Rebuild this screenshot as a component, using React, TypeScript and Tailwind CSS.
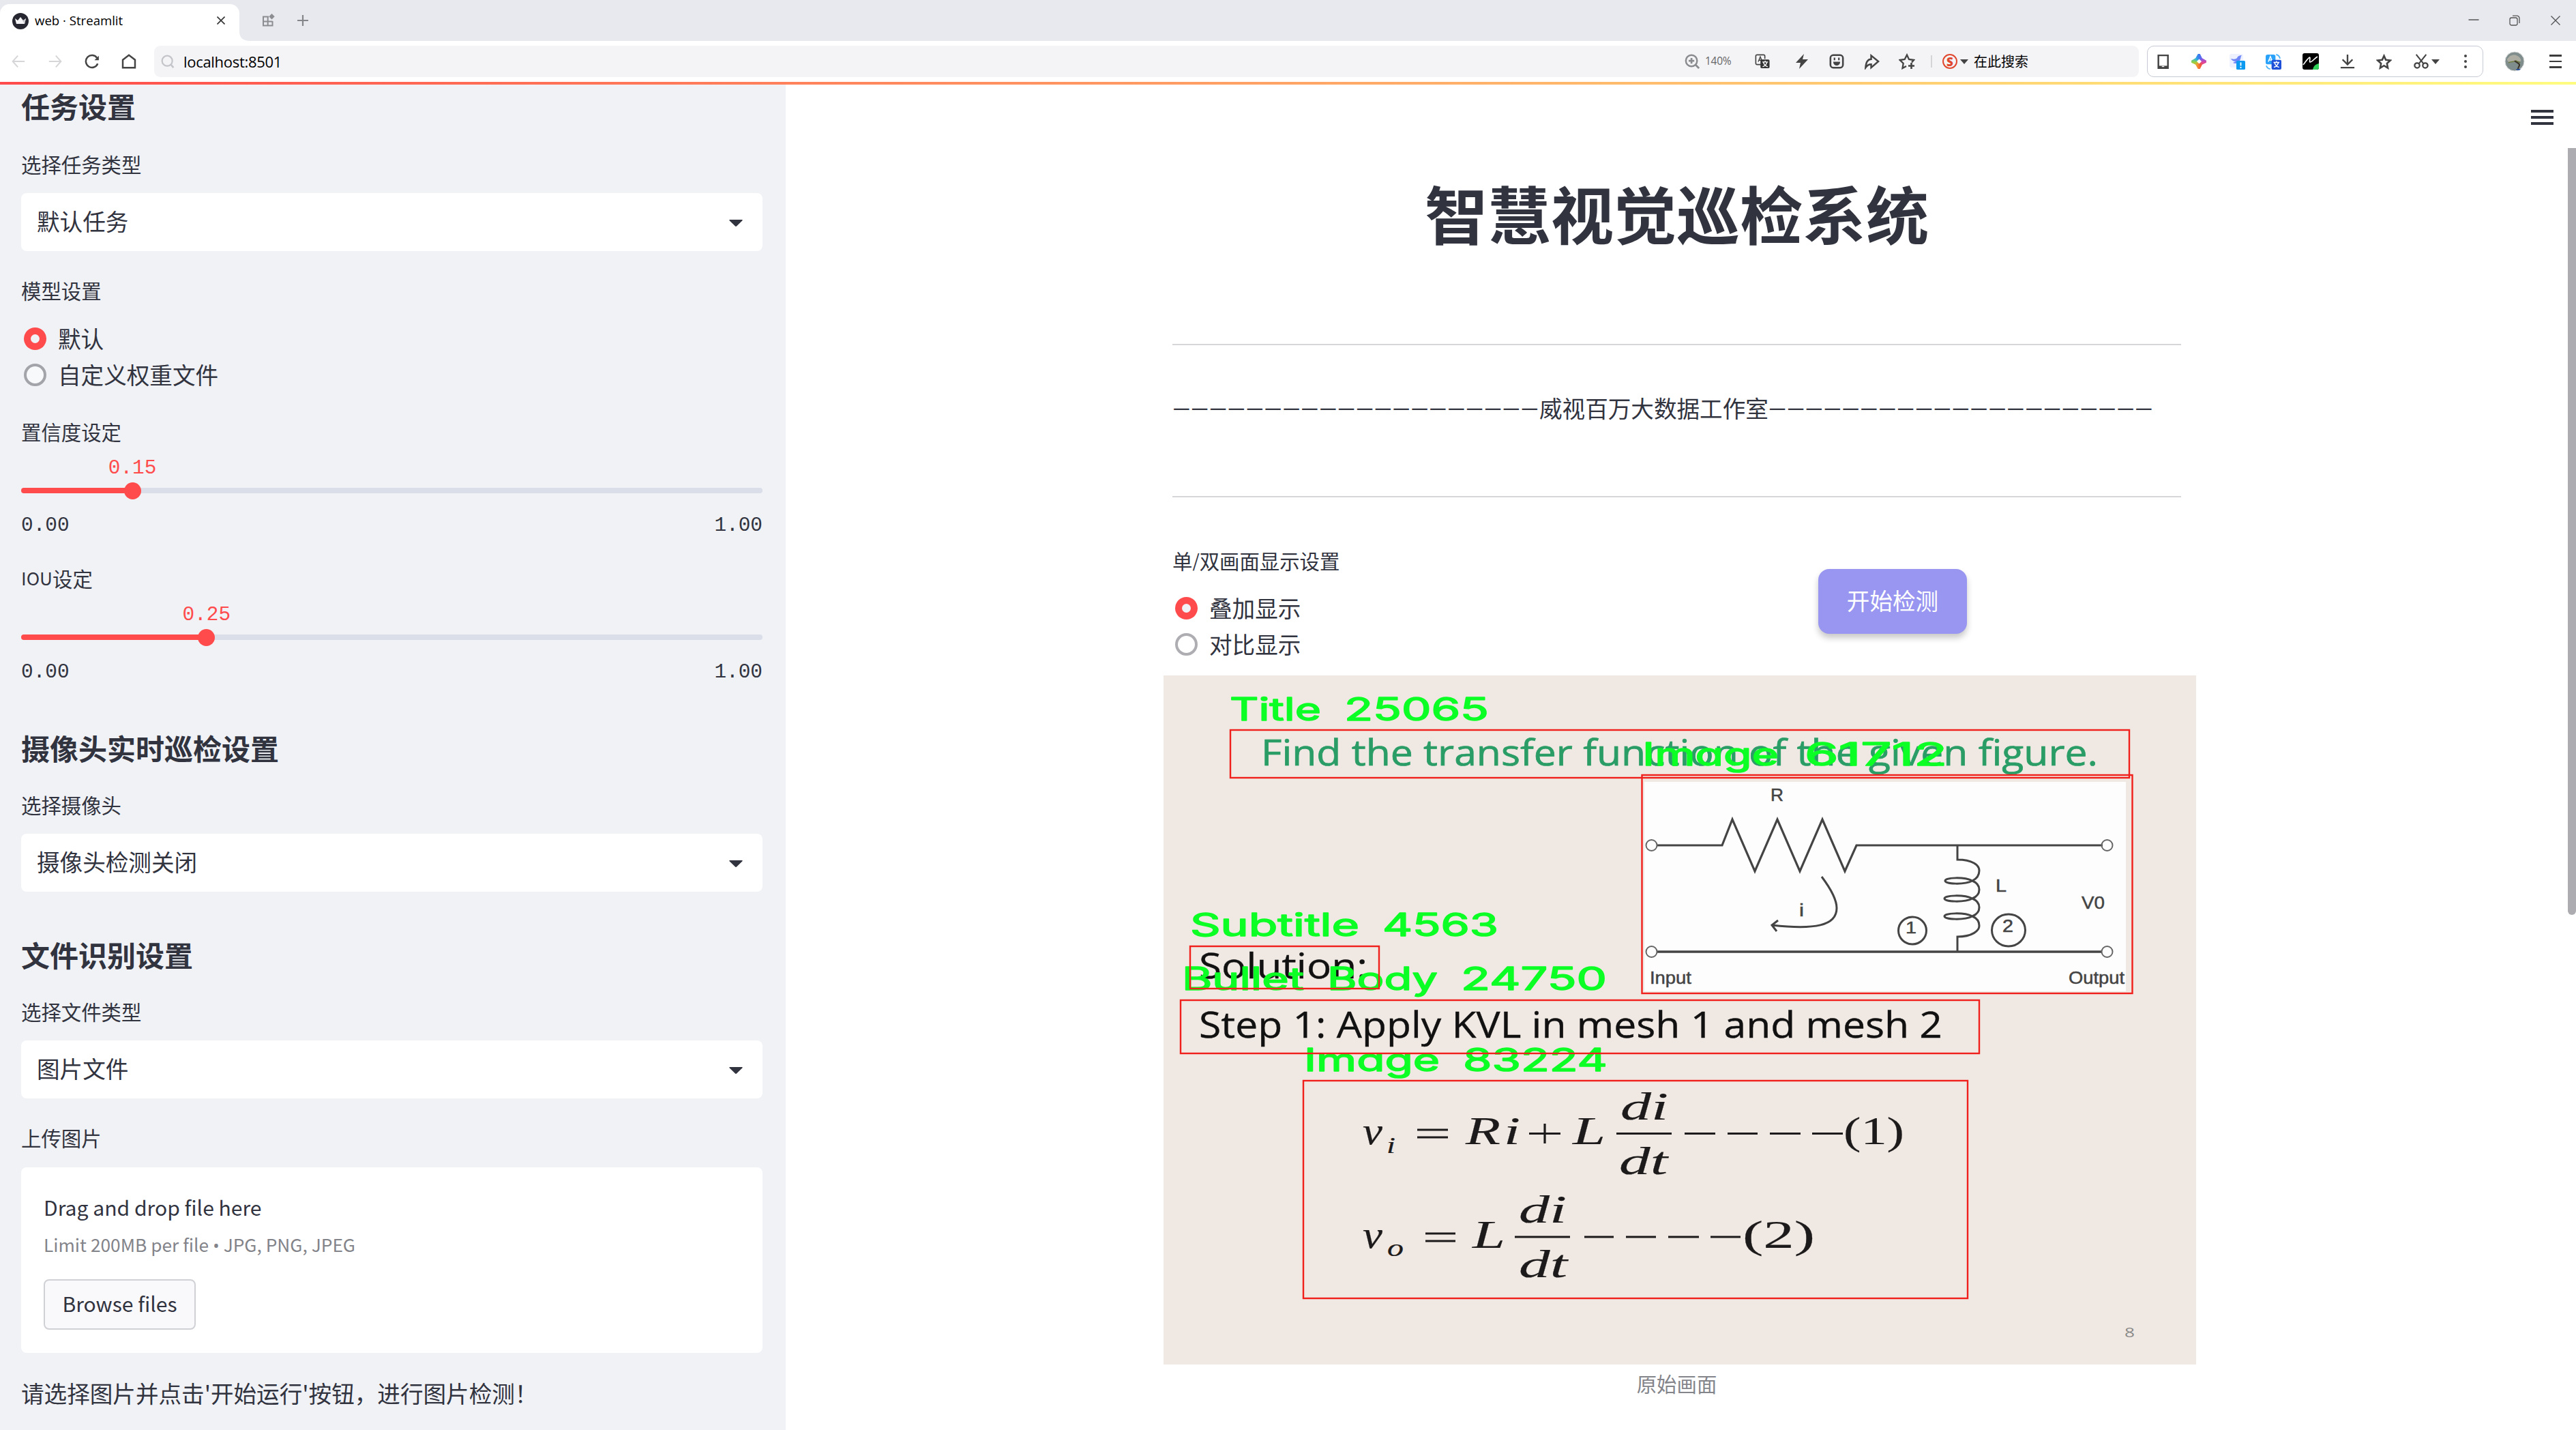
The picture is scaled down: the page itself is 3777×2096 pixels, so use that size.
import type { ReactNode } from "react";

const CJK = "font-['Noto_Sans_CJK_SC',sans-serif]";

function Svg({ size = 24, box = "0 0 24 24", children, color = "#444" }: { size?: number; box?: string; children: ReactNode; color?: string }) {
  return (
    <svg width={size} height={size} viewBox={box} fill="none" stroke={color} strokeWidth="2" className="block shrink-0">
      {children}
    </svg>
  );
}

/* Toolbar cell with a centred icon */
function Cell({ w, children }: { w: string; children: ReactNode }) {
  return <div className={`flex shrink-0 items-center justify-center ${w}`}>{children}</div>;
}

function TabBar() {
  return (
    <div className="flex h-[60px] items-end bg-[#e8e9ee]">
      <div className="flex h-[54px] w-[351px] items-center rounded-t-[14px] bg-white pb-[6px]">
        <div className="ml-[18px] mt-px">
          <Svg size={24} color="none">
            <circle cx="12" cy="12" r="12" fill="#262730" />
            <path d="M4 8l4 3 4-5 4 5 4-3-2 8H6z" fill="#f5f5f7" />
            <path d="M12 6l4 5 4-3-2 8z" fill="#c9c9cd" />
          </Svg>
        </div>
        <span className="ml-[9px] w-[260px] whitespace-pre font-['Open_Sans',sans-serif] text-[18.6px] leading-[28px] text-black">web · Streamlit</span>
        <div className="ml-[7px]">
          <Svg size={12} box="0 0 12 12" color="#333">
            <path d="M.5.5l11 11M11.5.5l-11 11" strokeWidth="1.6" />
          </Svg>
        </div>
      </div>
      <svg width="16" height="14" viewBox="0 0 16 14" className="block shrink-0">
        <path d="M0 0c0 9 5 14 16 14H0z" fill="#fff" />
      </svg>
      <div className="flex h-full flex-1 items-center">
        <div className="ml-[17px]">
          <Svg size={20} box="0 0 20 20" color="#8c8d91">
            <path d="M10 4.500H2v13h13.500V11M8.700 4.500v13M2 11.500h13.500" strokeWidth="2" />
            <path d="M14.500 0l4.200 4.200-4.200 4.200-4.200-4.200z" fill="#8c8d91" stroke="none" />
          </Svg>
        </div>
        <div className="ml-[32px]">
          <Svg size={16} box="0 0 16 16" color="#858689">
            <path d="M8 0v16M0 8h16" strokeWidth="2.200" />
          </Svg>
        </div>
      </div>
      <div className="flex h-full items-center">
        <Cell w="w-[60px]">
          <Svg size={16} box="0 0 16 16" color="#555"><path d="M.5 7h15" strokeWidth="1.500" /></Svg>
        </Cell>
        <Cell w="w-[60px]">
          <Svg size={16} box="0 0 16 16" color="#555">
            <rect x="1" y="4" width="11" height="11" rx="2.500" strokeWidth="1.300" />
            <path d="M5 1.200h6.500a3.500 3.500 0 013.500 3.500V12" strokeWidth="1.300" />
          </Svg>
        </Cell>
        <Cell w="w-[60px]">
          <Svg size={14} box="0 0 14 14" color="#555"><path d="M.5.5l13 13M13.500.5l-13 13" strokeWidth="1.400" /></Svg>
        </Cell>
      </div>
    </div>
  );
}

function Toolbar() {
  return (
    <div className="flex h-[60px] items-center bg-white">
      <Cell w="w-[54px]"><Svg size={20} color="#d6d6d8"><path d="M11 2L2 12l9 10M2 12h21" strokeWidth="2.400" /></Svg></Cell>
      <Cell w="w-[54px]"><Svg size={20} color="#d6d6d8"><path d="M13 2l9 10-9 10M22 12H1" strokeWidth="2.400" /></Svg></Cell>
      <Cell w="w-[54px]">
        <Svg size={22}>
          <path d="M21 15.500A9.800 9.800 0 1120 6.500" strokeWidth="2.700" />
          <path d="M22.800 3v7h-7z" fill="#444" stroke="none" />
        </Svg>
      </Cell>
      <Cell w="w-[54px]"><Svg size={22}><path d="M2.200 9.500L12 2l9.800 7.500v12.700H2.200z" strokeWidth="2.700" /></Svg></Cell>
      <div className="ml-[10px] flex h-[46px] w-[2910px] shrink-0 items-center rounded-[9px] bg-[#f4f4f7]">
        <Cell w="w-[40px]">
          <Svg size={20} color="#c4c5c9"><circle cx="11" cy="11" r="9" strokeWidth="2.700" /><path d="M17 17l5 6" strokeWidth="3" /></Svg>
        </Cell>
        <span className="ml-[3px] flex-1 font-['Open_Sans',sans-serif] text-[22px] leading-[30px] tracking-[-0.300px] text-black">localhost:8501</span>
        <Cell w="w-[32px]">
          <Svg size={22} color="#8a8b8e"><circle cx="11" cy="11" r="9" strokeWidth="2.700" /><path d="M17 17l6 6M6.500 11h9M11 6.500v9" strokeWidth="3" /></Svg>
        </Cell>
        <span className="ml-[3px] w-[50px] font-['Open_Sans',sans-serif] text-[15.500px] tracking-[-0.300px] text-[#666]">140%</span>
        <div className="flex items-center">
          <Cell w="w-[68px]">
            <Svg size={22}>
              <path d="M10 17H3.500A2 2 0 011.500 15V3.500a2 2 0 012-2H14a2 2 0 012 2V8" strokeWidth="1.800" />
              <path d="M5.500 12.500L8.700 4.500l3.200 8M6.600 10h4.300" strokeWidth="1.600" />
              <rect x="9" y="9" width="14.500" height="14" rx="2" fill="#333" stroke="none" />
              <path d="M12 13h9M16.500 11v2M19.500 13c-1 4-4 6.500-7 7.500M13.500 13c1 4 4 6.500 7 7.500" stroke="#fff" strokeWidth="1.500" />
            </Svg>
          </Cell>
          <Cell w="w-[48px]"><Svg size={24} color="none"><path d="M15 1L3 14h7l-2 9L21 9h-8z" fill="#444" /></Svg></Cell>
          <Cell w="w-[54px]">
            <Svg size={22}>
              <rect x="2" y="2" width="20" height="20" rx="4.500" strokeWidth="2.800" />
              <path d="M8.500 6v4M15.500 6v4" strokeWidth="2.400" />
              <path d="M6.500 12.500h11c0 8-11 8-11 0z" fill="#444" stroke="none" />
            </Svg>
          </Cell>
          <Cell w="w-[48px]">
            <Svg size={23}><path d="M11 2.500L22 11.500 11 21v-5c-3 0-6 1.500-8.500 5C3 13 5.500 8 11 8z" strokeWidth="2.600" /></Svg>
          </Cell>
          <Cell w="w-[56px]">
            <Svg size={24}>
              <path d="M11 19L5.500 22l1.200-7-5-5 7-1L12 2.500 15 9l7 1-3 3.500" strokeWidth="2.300" />
              <path d="M18.500 14v9M14 18.500h9" strokeWidth="2.600" />
            </Svg>
          </Cell>
          <div className="ml-[7px] h-[18px] w-[2px] bg-[#d5d5d8]" />
          <Cell w="w-[52px]">
            <span className="flex h-[22px] w-[22px] items-center justify-center rounded-full border-2 border-[#e0492f] font-['Open_Sans',sans-serif] text-[17px] font-extrabold leading-none text-[#e0492f]">S</span>
          </Cell>
        </div>
        <div className="-ml-[11px]">
          <Svg size={12} box="0 0 12 12" color="none"><path d="M0 3h12L6 10z" fill="#444" /></Svg>
        </div>
        <span className={`ml-[8px] mr-[162px] text-[20px] leading-[30px] text-black ${CJK}`}>在此搜索</span>
      </div>
      <div className="ml-[12px] flex h-[46px] w-[493px] shrink-0 items-center rounded-[10px] border-[1.500px] border-[#c6cad4] bg-white">
        <Cell w="w-[44px]">
          <Svg size={21}><rect x="4.200" y="1.200" width="16" height="21.500" strokeWidth="2.800" /><path d="M4 20.500h16" strokeWidth="3.500" /><path d="M10 20h4" stroke="#fff" strokeWidth="1.500" /></Svg>
        </Cell>
        <Cell w="w-[62px]">
          <div className="h-[22px] w-[22px] bg-[conic-gradient(#3b7cf0,#7a5be8,#e0459b,#f0553a,#f59a30,#9bd23c,#2fb5d8,#3b7cf0)] [clip-path:polygon(50%_0,58%_0,72%_28%,100%_44%,100%_58%,72%_72%,58%_100%,44%_100%,28%_72%,0_58%,0_44%,28%_28%,44%_0)]">
            <div className="mx-auto h-[5px] w-[5px] translate-y-[8.500px] rotate-45 bg-white" />
          </div>
        </Cell>
        <Cell w="w-[50px]">
          <Svg size={24} color="none">
            <rect x="1" y="1" width="20" height="20" rx="3" fill="#eef1ff" />
            <path d="M3 8c4 1 7 1 9-1 1-3 4-4 7-4-2 2-1 4-3 8-2 4-7 5-10 3l4-2c-4 0-6-2-7-4z" fill="#6f86f7" />
            <rect x="11" y="11" width="13" height="13" rx="1.500" fill="#0b9af0" />
            <path d="M17.500 13.500v5M17.500 20v2" stroke="#fff" strokeWidth="1.800" />
          </Svg>
        </Cell>
        <Cell w="w-[57px]">
          <Svg size={23} color="none">
            <rect x="0" y="1" width="15" height="15" rx="3" fill="#2aa2fa" />
            <path d="M4 12l3.200-8 3.200 8M5 9.500h4.500" stroke="#fff" strokeWidth="1.600" />
            <path d="M16 1c3 .5 5 2.500 6 6M1 18c1 3 3 5 6 5" stroke="#4db4fb" strokeWidth="2" />
            <rect x="9" y="9" width="15" height="15" rx="2" fill="#1f50d8" />
            <path d="M12 13h9M16.500 11v2M19.500 13c-1 4-4 6.500-7 7.500M13.500 13c1 4 4 6.500 7 7.500" stroke="#fff" strokeWidth="1.500" />
          </Svg>
        </Cell>
        <Cell w="w-[51px]">
          <Svg size={24} color="none">
            <rect width="24" height="24" rx="3" fill="#000" />
            <path d="M24 15v6a3 3 0 01-3 3h-6c1-5 4-8 9-9z" fill="#2fd158" />
            <path d="M1 17C5 12 8 7 10.500 6c1.500 0-1 7 .5 7C14 13 17 8 22 5" stroke="#fff" strokeWidth="1.600" />
          </Svg>
        </Cell>
        <Cell w="w-[57px]"><Svg size={22}><path d="M12 1v15M4 9l8 8 8-8M1 22h22" strokeWidth="2.600" /></Svg></Cell>
        <Cell w="w-[51px]"><Svg size={23}><path d="M12 3l2.800 6.200 6.700.8-5 4.600 1.300 6.900L12 18l-5.800 3.500 1.300-6.900-5-4.600 6.700-.8z" strokeWidth="2.700" /></Svg></Cell>
        <Cell w="w-[57px]">
          <Svg size={22}><path d="M4 1l12 15M20 1L8 16" strokeWidth="2.300" /><circle cx="5.500" cy="18.500" r="4" strokeWidth="2.500" /><circle cx="18.500" cy="18.500" r="4" strokeWidth="2.500" /></Svg>
        </Cell>
        <div className="-ml-[13px]"><Svg size={12} box="0 0 12 12" color="none"><path d="M0 3h12L6 10z" fill="#444" /></Svg></div>
        <div className="ml-[36px] flex flex-col gap-[4px]">
          <i className="h-[4px] w-[4px] rounded-full bg-[#444]" />
          <i className="h-[4px] w-[4px] rounded-full bg-[#444]" />
          <i className="h-[4px] w-[4px] rounded-full bg-[#444]" />
        </div>
      </div>
      <Cell w="w-[92px]">
        <Svg size={30} box="0 0 30 30" color="none">
          <circle cx="15" cy="15" r="14" fill="#7f8e8c" stroke="#ddd" strokeWidth="1" />
          <path d="M4 13c0-3 3-4 4-6 3-1 6-2 9-1 3 1 6 3 7 6 1 3-1 4-4 3-3 2-5 1-7 0-3 2-7 2-9-2z" fill="#aeada4" />
          <path d="M6 17c3-2 8-1 11-3 2 2 5 1 6 3" stroke="#6c7a3c" strokeWidth="1.500" />
          <path d="M15 14c2 3 8 3 7 7-1 2-2 3-2 5" stroke="#3b3327" strokeWidth="2" />
          <path d="M17 26h7l-2 2h-4z" fill="#2a4f9c" />
        </Svg>
      </Cell>
      <div className="ml-[5px] flex w-[18px] flex-col gap-[6px]">
        <i className="h-[2.500px] bg-[#3c3c3c]" />
        <i className="h-[2.500px] bg-[#3c3c3c]" />
        <i className="h-[2.500px] bg-[#3c3c3c]" />
      </div>
    </div>
  );
}

function Heading({ children, cls }: { children: ReactNode; cls: string }) {
  return <h2 className={`flex h-[66px] items-center pb-[5px] text-[42px] font-bold leading-none ${cls}`}>{children}</h2>;
}

function Label({ children, cls }: { children: ReactNode; cls: string }) {
  return <div className={`flex items-center pb-[3px] text-[29.400px] leading-none ${cls}`}>{children}</div>;
}

function Select({ children }: { children: ReactNode }) {
  return (
    <div className="flex h-[85px] items-center justify-between rounded-[8px] bg-white pl-[23px] pr-[29px]">
      <span className="pb-[4px] leading-none">{children}</span>
      <svg width="20" height="10" viewBox="0 0 20 10" className="mt-[3px] block">
        <path d="M1 0h18a.8.800 0 01.5 1.200l-8.500 8.300a1.400 1.400 0 01-2 0L.5 1.200A.8.800 0 011 0z" fill="#31333f" />
      </svg>
    </div>
  );
}

function Radio({ on, children, light }: { on?: boolean; children: ReactNode; light?: boolean }) {
  return (
    <div className="flex h-[53px] items-center">
      {on ? (
        <span className="ml-[4px] flex h-[33px] w-[33px] items-center justify-center rounded-full bg-[#ff4b4b]">
          <i className="h-[12.600px] w-[12.600px] rounded-full bg-[#f0f2f6]" />
        </span>
      ) : (
        <span className={`ml-[4px] h-[33px] w-[33px] rounded-full border-[4px] ${light ? "border-[#adadb2] bg-white" : "border-[#a3a4aa] bg-[#f8f9fb]"}`} />
      )}
      <span className="ml-[17px] pb-[2px] leading-none">{children}</span>
    </div>
  );
}

function Slider({ value, pct }: { value: string; pct: number }) {
  return (
    <>
      <div className="flex h-[42px] items-center pt-[4px]">
        <div className="flex w-0 justify-center" style={{ marginLeft: `${pct}%` }}>
          <span className="font-['Liberation_Mono',monospace] text-[29.400px] leading-none text-[#ff4b4b]">{value}</span>
        </div>
      </div>
      <div className="flex h-[26px] items-center">
        <div className="h-[8.400px] rounded-l-[4px] bg-[#ff4b4b]" style={{ width: `${pct}%` }} />
        <i className="relative -mx-[12.500px] h-[25px] w-[25px] shrink-0 rounded-full bg-[#ff4b4b]" />
        <div className="h-[8.400px] flex-1 rounded-r-[4px] bg-[#dadee9]" />
      </div>
      <div className="flex h-[72px] items-center justify-between pt-[5px] font-['Liberation_Mono',monospace] text-[29.400px] leading-none">
        <span>0.00</span>
        <span>1.00</span>
      </div>
    </>
  );
}

function Sidebar() {
  return (
    <aside className="h-[1972px] w-[1152px] shrink-0 overflow-hidden bg-[#f0f2f6] pl-[31px] pr-[34px]">
      <Heading cls="">任务设置</Heading>
      <Label cls="mt-[12px] h-[81px]">选择任务类型</Label>
      <Select>默认任务</Select>
      <Label cls="mt-[18px] h-[82px]">模型设置</Label>
      <div className="mt-[2px]">
        <Radio on>默认</Radio>
        <Radio>自定义权重文件</Radio>
      </div>
      <Label cls="mt-[28px] h-[60px]">置信度设定</Label>
      <Slider value="0.15" pct={15} />
      <Label cls="mt-[15px] h-[60px]">
        <span className="text-[26.200px]">IOU</span>设定
      </Label>
      <Slider value="0.25" pct={25} />
      <Heading cls="mt-[46px]">摄像头实时巡检设置</Heading>
      <Label cls="mt-[9px] h-[82px]">选择摄像头</Label>
      <Select>摄像头检测关闭</Select>
      <Heading cls="mt-[61px]">文件识别设置</Heading>
      <Label cls="mt-[9px] h-[82px]">选择文件类型</Label>
      <Select>图片文件</Select>
      <Label cls="mt-[17px] h-[84px]">上传图片</Label>
      <div className="flex h-[272px] flex-col items-start rounded-[8px] bg-white pl-[33px] pt-[31px]">
        <span className="h-[55px] text-[30.100px] leading-[54px]">Drag and drop file here</span>
        <span className="h-[55px] text-[26.300px] leading-[53px] text-[#83848a]">
          Limit 200MB per file <span className="font-['Open_Sans',sans-serif]">•</span> JPG, PNG, JPEG
        </span>
        <span className="mt-[23px] flex h-[74px] w-[223px] items-center justify-center rounded-[8px] border-2 border-[#d0d1d5] bg-[#f9f9fb] pb-[3px] text-[30.100px] leading-none">Browse files</span>
      </div>
      <div className="mt-[29px] flex h-[60px] items-center whitespace-nowrap leading-none">请选择图片并点击'开始运行'按钮，进行图片检测！</div>
    </aside>
  );
}

/* Text run stretched to a fixed width on the slide */
function T({ x, x2, y, size, cls, children }: { x: number; x2: number; y: number; size: number; cls: string; children: string }) {
  return (
    <text x={x} y={y} fontSize={size} textLength={x2 - x} lengthAdjust="spacingAndGlyphs" className={cls}>
      {children}
    </text>
  );
}

const TAG = "fill-[#0cff25] stroke-[#0cff25] stroke-[1.5px] font-['Inter',sans-serif] font-normal [font-feature-settings:'cv11'] [stroke-linejoin:round]";
const MATH = "fill-[#1c1a1a] stroke-[#1c1a1a] stroke-[0.2px] font-['Liberation_Serif',serif] italic";
const MATHR = "fill-[#1c1a1a] stroke-[#1c1a1a] stroke-[0.2px] font-['Liberation_Serif',serif]";
const CIRC = "fill-[#444] stroke-[#444] stroke-[0.5px] font-['Liberation_Sans',sans-serif]";
const SLIDE = "font-['Open_Sans',sans-serif]";

function Slide() {
  return (
    <svg width="1514" height="1010" viewBox="1706 990 1514 1010" className="-ml-[13px] block">
      <rect x="1706" y="990" width="1514" height="1010" fill="#f0e8e2" />
      <T x={1849} x2={3076} y={1122} size={53} cls={`fill-[#2a9d66] stroke-[#2a9d66] stroke-[0.7px] ${SLIDE}`}>Find the transfer function of the given figure.</T>
      <rect x="2411" y="1146" width="706" height="307" fill="#fdfdfe" />

      <g fill="none" stroke="#444" strokeWidth="3">
        <path d="M2430 1239h95l15-38 33 76 33-76 33 76 33-76 33 76 17-38h361" strokeWidth="3.200" />
        <path d="M2430 1395h652" strokeWidth="3.600" />
        <g strokeWidth="2" stroke="#666">
          <circle cx="2421.500" cy="1239" r="8" />
          <circle cx="3089.500" cy="1239" r="8" />
          <circle cx="2421.500" cy="1395" r="8" />
          <circle cx="3089.500" cy="1395" r="8" />
        </g>
        <path d="M2870 1239v21c22 0 32 8 32 16 0 8-4 12-10 15-12 6-40 5-40 0s28-6 40 0c7 3 10 7 10 13s-3 10-10 13c-12 6-41 5-41 0s29-6 41 0c7 3 10 7 10 13s-3 10-10 13c-12 6-41 5-41 0s29-6 41 0c7 3 10 7 10 14s-10 16-32 16v22" />
        <path d="M2671 1285c12 16 22 32 22 46 0 26-32 32-95 25M2607 1349l-9 7 7 9" />
        <ellipse cx="2804" cy="1364" rx="20.500" ry="20" />
        <ellipse cx="2945" cy="1363.500" rx="24.500" ry="23.500" />
      </g>
      <T x={2596} x2={2615} y={1174} size={25} cls={CIRC}>R</T>
      <T x={2926} x2={2942} y={1307} size={25} cls={CIRC}>L</T>
      <T x={3052} x2={3086} y={1332} size={26} cls={CIRC}>V0</T>
      <T x={2638} x2={2645} y={1343} size={25} cls={CIRC}>i</T>
      <T x={2794} x2={2810} y={1368} size={24} cls={CIRC}>1</T>
      <T x={2936} x2={2952} y={1366} size={25} cls={CIRC}>2</T>
      <T x={2419} x2={2480} y={1442} size={25} cls={CIRC}>Input</T>
      <T x={3033} x2={3115} y={1442} size={25} cls={CIRC}>Output</T>

      <T x={1758} x2={2005} y={1434} size={52} cls={`fill-[#111] stroke-[#111] stroke-[0.4px] ${SLIDE}`}>Solution:</T>
      <T x={1758} x2={2848} y={1521} size={52.5} cls={`fill-[#111] stroke-[#111] stroke-[0.4px] ${SLIDE}`}>Step 1: Apply KVL in mesh 1 and mesh 2</T>

      <T x={1998} x2={2027} y={1677} size={57} cls={MATH}>v</T>
      <T x={2033} x2={2046} y={1690} size={34} cls={MATH}>i</T>
      <T x={2149} x2={2200} y={1677} size={57} cls={MATH}>R</T>
      <T x={2205} x2={2229} y={1677} size={57} cls={MATH}>i</T>
      <T x={2306} x2={2354} y={1677} size={57} cls={MATH}>L</T>
      <T x={2376} x2={2446} y={1641} size={57} cls={MATH}>di</T>
      <T x={2374} x2={2445} y={1721} size={57} cls={MATH}>dt</T>
      <T x={2703} x2={2792} y={1677} size={57} cls={MATHR}>(1)</T>
      <T x={1998} x2={2027} y={1829} size={57} cls={MATH}>v</T>
      <T x={2034} x2={2058} y={1841} size={35} cls={MATH}>o</T>
      <T x={2159} x2={2207} y={1829} size={57} cls={MATH}>L</T>
      <T x={2227} x2={2297} y={1792} size={57} cls={MATH}>di</T>
      <T x={2227} x2={2298} y={1872} size={57} cls={MATH}>dt</T>
      <T x={2555} x2={2661} y={1829} size={57} cls={MATHR}>(2)</T>
      <path
        d="M2078 1656h45M2078 1667h45M2242 1661.500h46M2265 1647v29M2370 1661.500h81M2470 1661.500h45M2533 1661.500h44M2595 1661.500h45M2657 1661.500h45M2090 1808h44M2090 1819h44M2221 1813h81M2323 1813h43M2384 1813h44M2446 1813h45M2508 1813h44"
        stroke="#1c1a1a"
        strokeWidth="3.200"
        fill="none"
      />
      <T x={3115} x2={3130} y={1960} size={20} cls={`fill-[#888] ${SLIDE}`}>8</T>

      <T x={1803} x2={1937} y={1056} size={46} cls={TAG}>Title</T>
      <T x={1971} x2={2183} y={1056} size={46} cls={TAG}>25065</T>
      <T x={2408} x2={2608} y={1122} size={46} cls={TAG}>Image</T>
      <T x={2646} x2={2855} y={1122} size={46} cls={TAG}>61712</T>
      <T x={1745} x2={1993} y={1372} size={46} cls={TAG}>Subtitle</T>
      <T x={2027} x2={2197} y={1372} size={46} cls={TAG}>4563</T>
      <T x={1733} x2={1912} y={1451} size={46} cls={TAG}>Bullet</T>
      <T x={1946} x2={2108} y={1451} size={46} cls={TAG}>Body</T>
      <T x={2142} x2={2356} y={1451} size={46} cls={TAG}>24750</T>
      <T x={1912} x2={2111} y={1570} size={46} cls={TAG}>Image</T>
      <T x={2145} x2={2357} y={1570} size={46} cls={TAG}>83224</T>

      <g fill="none" stroke="#f0201c" strokeWidth="2.400">
        <rect x="1804" y="1070" width="1318" height="70" />
        <rect x="2407.500" y="1136" width="719" height="320" />
        <rect x="1745" y="1387" width="277" height="62" />
        <rect x="1731" y="1466" width="1171" height="78" />
        <rect x="1911" y="1584" width="974" height="319" />
      </g>
    </svg>
  );
}

function Main() {
  return (
    <main className="flex h-[1972px] flex-1 bg-white">
      <div className="ml-[567px] w-[1479px] shrink-0">
        <h1 className="flex h-[380px] items-center justify-center pb-[6px] text-[92.400px] font-bold leading-none">智慧视觉巡检系统</h1>
        <div className="h-[2px] bg-[#d6d6d9]" />
        <div className="flex h-[221px] items-center pb-[37px] leading-none">
          <span className="w-[538px] shrink-0 overflow-visible whitespace-nowrap font-['Lato',sans-serif] tracking-[0.220px]">————————————————————</span>
          <span className="shrink-0">威视百万大数据工作室</span>
          <span className="whitespace-nowrap font-['Lato',sans-serif] tracking-[0.220px]">—————————————————————</span>
        </div>
        <div className="h-[2px] bg-[#d6d6d9]" />
        <div className="flex h-[261px]">
          <div className="w-[947px] pt-[53px]">
            <Label cls="h-[82px]">
              单<span className="text-[26.200px]">/</span>双画面显示设置
            </Label>
            <div className="mt-px">
              <Radio on>叠加显示</Radio>
              <Radio light>对比显示</Radio>
            </div>
          </div>
          <div className="mt-[105px] flex h-[95px] w-[218px] items-center justify-center rounded-[16px] bg-[#9896f0] pb-[3px] leading-none text-white shadow-[0_6px_10px_rgba(0,0,0,0.22)]">开始检测</div>
        </div>
        <Slide />
        <div className="flex h-[58px] items-center justify-center pb-[3px] text-[29.400px] leading-none text-[#84858b]">原始画面</div>
      </div>
      <div className="ml-auto flex">
        <div className="mt-[37px] flex h-[22px] w-[33px] flex-col justify-between">
          <i className="h-[4px] bg-[#31333f]" />
          <i className="h-[4px] bg-[#31333f]" />
          <i className="h-[4px] bg-[#31333f]" />
        </div>
        <div className="ml-[21px] mt-[93px] h-[1124px] w-[12px] rounded-b-full bg-[#adacb1]" />
      </div>
    </main>
  );
}

export default function App() {
  return (
    <div className={`h-[2096px] w-[3777px] overflow-hidden bg-white text-[33.600px] text-[#31333f] ${CJK}`}>
      <TabBar />
      <Toolbar />
      <div className="h-[4px] bg-[linear-gradient(90deg,#ff4b4b,#fffd80)]" />
      <div className="flex">
        <Sidebar />
        <Main />
      </div>
    </div>
  );
}
